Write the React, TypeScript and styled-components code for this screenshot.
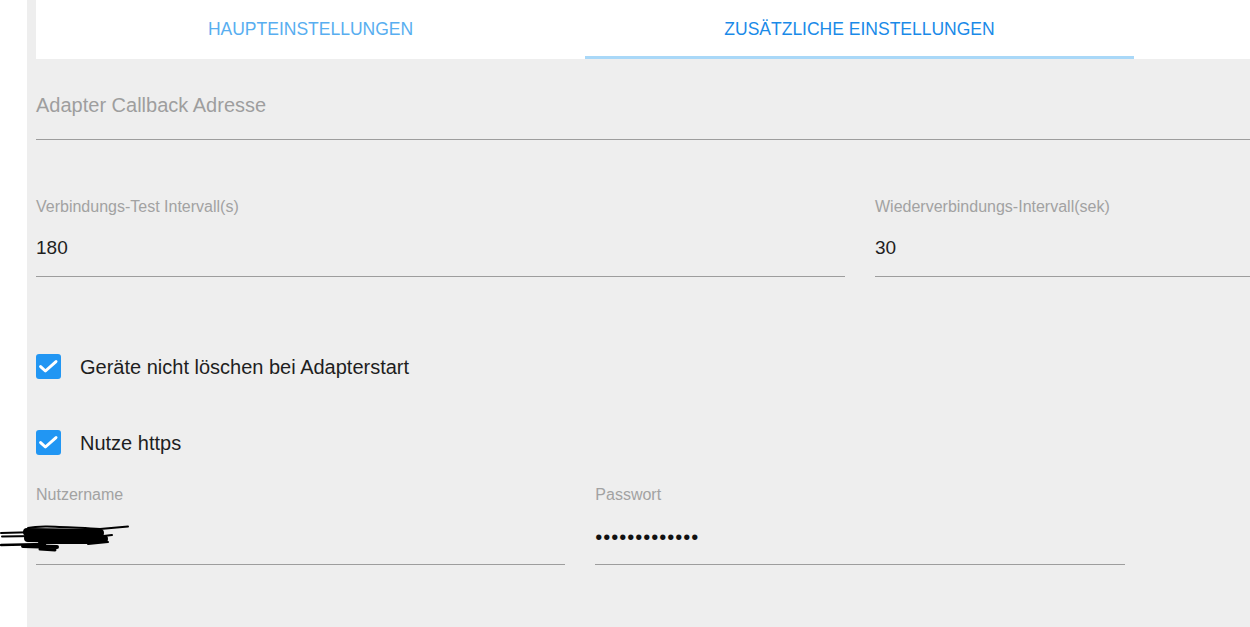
import React from "react";
import styled, { createGlobalStyle, css } from "styled-components";

const GlobalStyle = createGlobalStyle`
  html, body { margin: 0; padding: 0; background: #ffffff; overflow: hidden; }
  body { font-family: "Liberation Sans", Arial, sans-serif; }
  * { box-sizing: border-box; }
`;

const Page = styled.div`
  display: flex;
  padding-left: 27px;
  min-height: 627px;
  position: relative;
`;

const Panel = styled.div`
  flex-shrink: 0;
  width: 1700px;
  min-height: 627px;
  background: #eeeeee;
  padding-left: 9px;
  display: flex;
  flex-direction: column;
`;

const TabBar = styled.div`
  display: flex;
  width: 1678px;
  height: 59px;
  background: #ffffff;
`;

const Tab = styled.div<{ $active?: boolean }>`
  position: relative;
  width: 549px;
  display: flex;
  align-items: center;
  justify-content: center;
  font-size: 17.5px;
  color: ${(p) => (p.$active ? "#1a8ae8" : "#58aef0")};
  ${(p) =>
    p.$active &&
    css`
      &::after {
        content: "";
        position: absolute;
        left: 0;
        right: 0;
        bottom: 0;
        height: 3px;
        background: #a9d8f8;
      }
    `}
`;

const Form = styled.div`
  width: 1648px;
  display: flex;
  flex-direction: column;
`;

const WideField = styled.div`
  margin-top: 34px;
  padding-bottom: 22px;
  border-bottom: 1px solid #9d9d9d;
`;

const Placeholder = styled.div`
  font-size: 20px;
  line-height: 24px;
  color: #9e9e9e;
`;

const Row = styled.div<{ $cols: number; $top: number }>`
  display: grid;
  grid-template-columns: repeat(${(p) => p.$cols}, 1fr);
  column-gap: 30px;
  margin-top: ${(p) => p.$top}px;
`;

const Field = styled.div`
  display: flex;
  flex-direction: column;
  border-bottom: 1px solid #9d9d9d;
  padding-bottom: 16px;
`;

const Label = styled.div`
  font-size: 16px;
  line-height: 18px;
  color: #a2a2a2;
  margin-bottom: 20px;
`;

const Value = styled.div`
  font-size: 19px;
  line-height: 24px;
  height: 24px;
  color: #1e1e1e;
`;

const Dots = styled.div`
  font-size: 20px;
  line-height: 26px;
  height: 24px;
  color: #111;
  letter-spacing: 1px;
`;

const Checks = styled.div`
  display: flex;
  flex-direction: column;
  gap: 44px;
  margin-top: 74px;
`;

const CheckRow = styled.label`
  display: flex;
  align-items: center;
  gap: 19px;
  height: 32px;
  font-size: 20px;
  color: #1e1e1e;
`;

const Box = styled.span`
  width: 25px;
  height: 25px;
  border-radius: 3px;
  background: #2196f3;
  display: flex;
  align-items: center;
  justify-content: center;
  margin-top: -2px;
`;

const Scribble = styled.svg`
  position: absolute;
  left: 0;
  top: 515px;
  width: 130px;
  height: 45px;
`;

const CheckIcon = () => (
  <svg width="25" height="25" viewBox="0 0 25 25">
    <path d="M4.6 12.6 L9.4 17 L20 7.6" fill="none" stroke="#fff" strokeWidth="3" strokeLinecap="round" strokeLinejoin="round" />
  </svg>
);

export default function App() {
  return (
    <>
      <GlobalStyle />
      <Page>
        <Panel>
          <TabBar>
            <Tab>HAUPTEINSTELLUNGEN</Tab>
            <Tab $active>ZUSÄTZLICHE EINSTELLUNGEN</Tab>
          </TabBar>
          <Form>
            <WideField>
              <Placeholder>Adapter Callback Adresse</Placeholder>
            </WideField>
            <Row $cols={2} $top={58}>
              <Field>
                <Label>Verbindungs-Test Intervall(s)</Label>
                <Value>180</Value>
              </Field>
              <Field>
                <Label>Wiederverbindungs-Intervall(sek)</Label>
                <Value>30</Value>
              </Field>
            </Row>
            <Checks>
              <CheckRow>
                <Box>
                  <CheckIcon />
                </Box>
                Geräte nicht löschen bei Adapterstart
              </CheckRow>
              <CheckRow>
                <Box>
                  <CheckIcon />
                </Box>
                Nutze https
              </CheckRow>
            </Checks>
            <Row $cols={3} $top={27}>
              <Field>
                <Label>Nutzername</Label>
                <Value />
              </Field>
              <Field>
                <Label>Passwort</Label>
                <Dots>•••••••••••••</Dots>
              </Field>
            </Row>
          </Form>
        </Panel>
        <Scribble viewBox="0 0 130 45">
          <g stroke="#000" fill="none" strokeLinecap="round">
            <path d="M28 13 C40 10 60 12 100 14 L128 11.5" strokeWidth="2" />
            <path d="M27 17 L100 18" strokeWidth="8" />
            <path d="M28 23 L104 24" strokeWidth="8" />
            <path d="M40 27 L95 27" strokeWidth="4" />
            <path d="M1 18 L38 17" strokeWidth="2" />
            <path d="M2 21.5 L35 21" strokeWidth="2" />
            <path d="M1 30 L45 29" strokeWidth="2.5" />
            <path d="M23 31 L57 32" strokeWidth="4" />
            <path d="M40 34 L55 35" strokeWidth="3" />
            <path d="M95 22 L112 20" strokeWidth="2" />
            <path d="M88 29 L108 27" strokeWidth="2" />
          </g>
        </Scribble>
      </Page>
    </>
  );
}
